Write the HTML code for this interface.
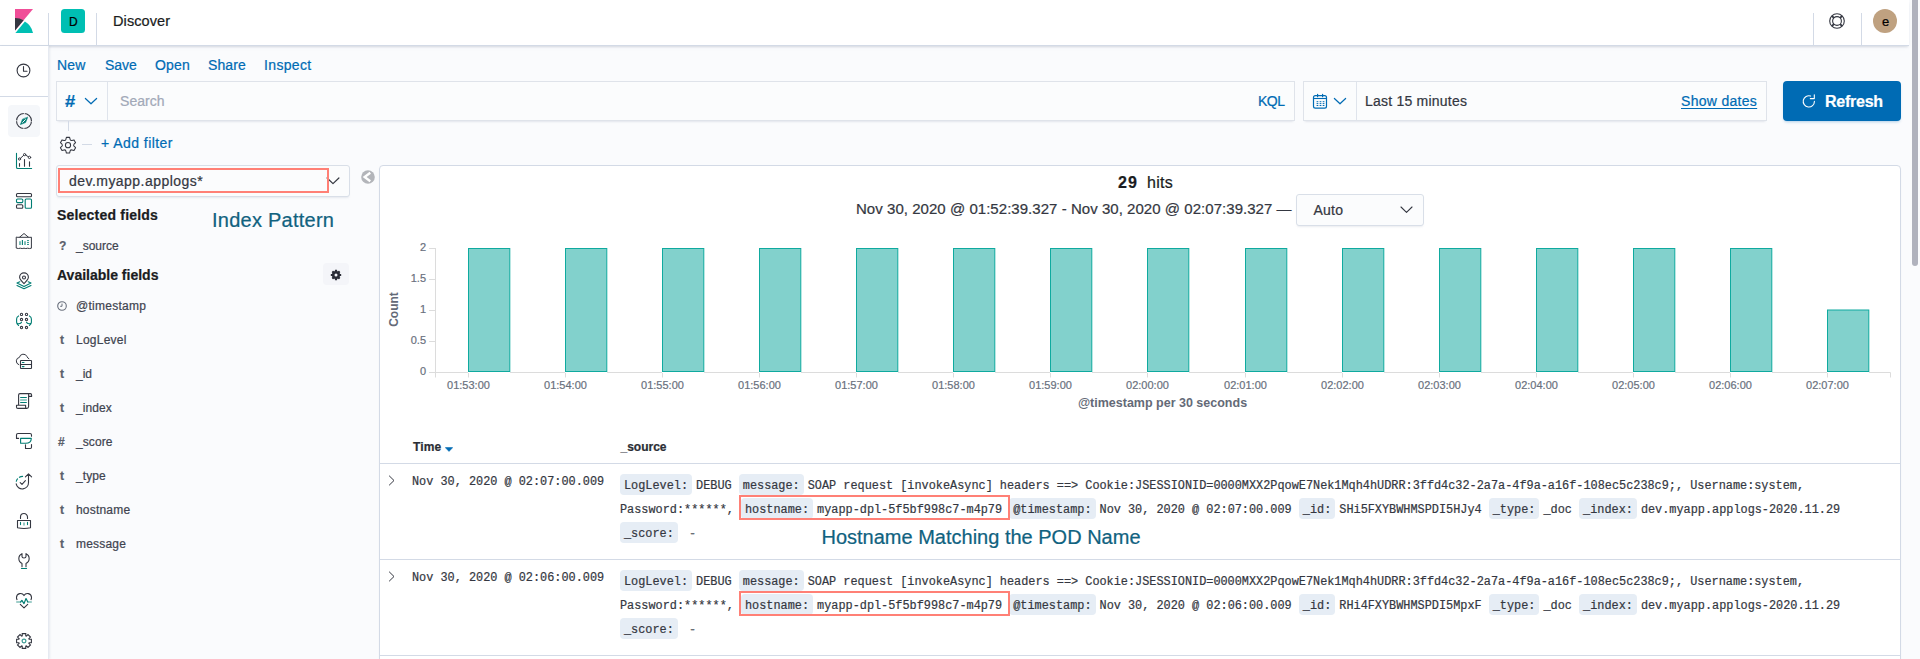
<!DOCTYPE html>
<html lang="en">
<head>
<meta charset="utf-8">
<title>Discover - Kibana</title>
<style>
*{box-sizing:border-box;margin:0;padding:0}
html,body{width:1920px;height:659px;overflow:hidden;background:#fafbfd;font-family:"Liberation Sans",sans-serif;color:#343741;font-size:14px}
.abs{position:absolute}
.t{position:absolute;white-space:nowrap;line-height:1;-webkit-text-stroke:0.22px}
#hdr{position:absolute;left:0;top:0;width:1909px;height:46px;background:#fff;border-bottom:1px solid #d3dae6;box-shadow:0 2px 2px -1px rgba(152,162,179,.3),0 1px 5px -2px rgba(152,162,179,.3)}
#nav{position:absolute;left:0;top:46px;width:49px;height:613px;background:#fff;border-right:1px solid #e6eaf1;box-shadow:1px 0 2px rgba(152,162,179,.18)}
.vsep{position:absolute;width:1px;background:#d3dae6}
.box{background:#fbfcfd;border:1px solid #dfe3ea;box-shadow:0 1px 1px -1px rgba(152,162,179,.2),0 3px 2px -2px rgba(152,162,179,.2)}
.fld{font-size:12px;color:#3f4450}
.ftype{font-size:12px;font-weight:bold;color:#5a606b}
.mono{font-family:"Liberation Mono",monospace;font-size:11.87px;-webkit-text-stroke:0.2px #343741}
.src{line-height:24px;color:#343741}
.src dl{display:block}
.src dt,.src dd{display:inline}
.src dt{background:#e6edf5;border-radius:4px;padding:5px 4px 2px;margin-right:4px;color:#343741}
</style>
</head>
<body>
<div class="abs" style="left:1909px;top:0;width:11px;height:659px;background:#fafbfd"></div>
<div class="abs" style="left:1912px;top:-4px;width:6px;height:270px;background:#b0b2bd;border-radius:3px"></div>
<div id="hdr"></div>
<svg class="abs" style="left:15px;top:9px" width="18" height="24" viewBox="0 0 18 24">
  <polygon points="0,0 18,0 0,21.5" fill="#f04e98"/>
  <path d="M0 9 L0 21.5 L8.6 11.2 A17 17 0 0 0 0 9Z" fill="#343741"/>
  <path d="M9.9 12.6 L0.4 24 L18 24 A17.5 17.5 0 0 0 9.9 12.6Z" fill="#00bfb3"/>
</svg>
<div class="vsep" style="left:48px;top:13px;height:33px"></div>
<div class="abs" style="left:61px;top:9px;width:24px;height:24px;border-radius:3.5px;background:#00bfb3"></div>
<div class="t" style="left:69px;top:15.5px;font-size:12px;color:#000" id="dletter">D</div>
<div class="vsep" style="left:96px;top:13px;height:33px"></div>
<div class="t" style="left:113px;top:13.6px;font-size:14.5px;color:#1a1c21;letter-spacing:0.1px" id="discover">Discover</div>
<div class="vsep" style="left:1813px;top:13px;height:33px"></div>
<svg class="abs" style="left:1829px;top:13px" width="16" height="16" viewBox="0 0 16 16" id="help"><g fill="none" stroke="#343741" stroke-width="1.1"><circle cx="8" cy="8" r="7.3"/><circle cx="8" cy="8" r="4.4"/><path d="M2.8 2.8 L4.9 4.9M13.2 2.8 L11.1 4.9M2.8 13.2 L4.9 11.1M13.2 13.2 L11.1 11.1" stroke-width="1.9"/></g></svg>
<div class="vsep" style="left:1861px;top:13px;height:33px"></div>
<div class="abs" style="left:1873px;top:9px;width:24px;height:24px;border-radius:12px;background:#bfa180"></div>
<div class="t" style="left:1881.9px;top:15.2px;font-size:13px;color:#000" id="eletter">e</div>
<div id="nav"></div>
<div class="abs" style="left:0;top:96px;width:48px;height:1px;background:#d3dae6"></div>
<div class="abs" style="left:8px;top:105px;width:32px;height:32px;border-radius:4px;background:#f5f7fa"></div>
<svg class="abs" style="left:0;top:0" width="48" height="659" viewBox="0 0 48 659" fill="none" stroke-linecap="round" stroke-linejoin="round" id="navicons"><circle cx="23.5" cy="70.5" r="6.4" stroke="#343741" stroke-width="1.1"/><path d="M23.5 66.6V71.2H27" stroke="#343741" stroke-width="1.1"/><circle cx="24" cy="121" r="7.5" stroke="#343741" stroke-width="1.1"/><circle cx="24" cy="121" r="7.5" stroke="#fff" stroke-width="1.4" stroke-dasharray="0.9 10.9" stroke-dashoffset="0.45" stroke-linecap="butt"/><path d="M27.6 117.4 L25.6 122.6 L20.4 124.6 L22.4 119.4Z" fill="#017d73" stroke="#017d73" stroke-width=".6"/><path d="M25.4 119.6 L22.6 122.4" stroke="#f5f7fa" stroke-width="1"/><path d="M16.5 153.4V167.2Q16.5 168.5 17.8 168.5H31.6" stroke="#017d73" stroke-width="1.1"/><path d="M19.5 163.5V166.3M24.5 159.5V166.3M29.5 161.8V166.3" stroke="#343741" stroke-width="1.1"/><path d="M20.4 158.3 L23.6 155.4M25.7 155.1 L28.4 156.8" stroke="#343741" stroke-width="1"/><circle cx="19.5" cy="159" r="1.1" stroke="#343741" stroke-width="1"/><circle cx="24.6" cy="154.6" r="1.1" stroke="#343741" stroke-width="1"/><circle cx="29.5" cy="157.4" r="1.2" stroke="#343741" stroke-width="1"/><rect x="16.5" y="193.5" width="15" height="3.3" rx="1" stroke="#343741" stroke-width="1.1"/><rect x="16.5" y="199" width="6.3" height="3.6" rx="1" stroke="#017d73" stroke-width="1.1"/><rect x="16.5" y="204.7" width="6.3" height="3.6" rx="1" stroke="#343741" stroke-width="1.1"/><rect x="25.2" y="199" width="6.3" height="9.3" rx="1" stroke="#017d73" stroke-width="1.1"/><path d="M16.6 237.2 Q18 237.6 19.6 237.2 L24 233.5 L28.4 237.2 Q30 237.6 31.4 237.2 V248.2 Q29.5 248.9 27.7 248.2 Q25.8 248.9 24 248.2 Q22.2 248.9 20.3 248.2 Q18.5 248.9 16.6 248.2Z" stroke="#343741" stroke-width="1"/><path d="M19.6 237.3H28.4" stroke="#343741" stroke-width="1"/><path d="M20 241.2V245M25 241.2V245" stroke="#7dbdb7" stroke-width="2" stroke-linecap="butt"/><path d="M22.4 240V245" stroke="#017d73" stroke-width="1.1" stroke-linecap="butt"/><path d="M27.2 240.6H28.8M27.2 242.6H28.8M27.2 244.5H28.8" stroke="#017d73" stroke-width="1" stroke-linecap="butt"/><path d="M24 283.6 C21.5 281 19.6 279.4 19.6 277.3 A4.4 4.4 0 0 1 28.4 277.3 C28.4 279.4 26.5 281 24 283.6Z" stroke="#343741" stroke-width="1.1"/><circle cx="24" cy="277.5" r="1.5" stroke="#343741" stroke-width="1.1"/><path d="M19.8 281.8 L17 283.1 L24 286.4 L31 283.1 L28.2 281.8M17 285.6 L24 288.8 L31 285.6" stroke="#017d73" stroke-width="1.1"/><circle cx="21.5" cy="314.4" r="1.15" stroke="#343741" stroke-width="1.05"/><circle cx="21.5" cy="319.5" r="1.15" stroke="#343741" stroke-width="1.05"/><circle cx="21.5" cy="327.5" r="1.15" stroke="#343741" stroke-width="1.05"/><circle cx="26.5" cy="314.4" r="1.15" stroke="#343741" stroke-width="1.05"/><circle cx="26.5" cy="319.5" r="1.15" stroke="#343741" stroke-width="1.05"/><circle cx="26.5" cy="327.5" r="1.15" stroke="#343741" stroke-width="1.05"/><path d="M18.6 315.9 Q16.6 316.8 16.6 319 V322.3 Q16.6 324.4 18.6 325.4 M16.7 322.8 Q17.3 323.9 19 323.7 Q21 323.5 21.5 322.3" stroke="#017d73" stroke-width="1.1"/><path d="M29.4 315.9 Q31.4 316.8 31.4 319 V322.3 Q31.4 324.4 29.4 325.4 M31.3 322.8 Q30.7 323.9 29 323.7 Q27 323.5 26.5 322.3" stroke="#017d73" stroke-width="1.1"/><rect x="20.5" y="360.5" width="11" height="8" rx=".6" stroke="#343741" stroke-width="1.1"/><path d="M20.5 364.5H31.5" stroke="#343741" stroke-width="1.1"/><path d="M22.4 362.5H24M22.4 366.6H24" stroke="#017d73" stroke-width="1.1"/><path d="M18.8 364.7 A3.8 3.8 0 0 1 19.4 357.4 A4 4 0 0 1 27 356.6 Q27.6 358.2 28.9 358.8" stroke="#343741" stroke-width="1"/><path d="M18.6 405.2V395 Q18.6 393.6 20 393.6 H30.3 Q31.6 393.6 31.6 395 V396.4 H28.6 V394.6 M28.6 394.6 V406.6 Q28.6 408.4 26.8 408.4 H17.8 Q16.5 408.4 16.5 407 V405.3 H25.6 V407.2 Q25.7 408.3 26.8 408.4" stroke="#343741" stroke-width="1.1"/><path d="M20.6 397.5H26.4M20.6 402.5H26.4" stroke="#017d73" stroke-width="1"/><path d="M20.6 400H26.4" stroke="#7dbdb7" stroke-width="1.4"/><path d="M18.6 438.4H16.5V435 Q16.5 433.5 18 433.5 H30 Q31.5 433.5 31.5 435 V436.2" stroke="#343741" stroke-width="1.1"/><path d="M20.6 438.4H31.3 Q31.2 443.2 25.6 443.3 H20.6Z" stroke="#017d73" stroke-width="1.1"/><path d="M25.5 444.8V448.5H30.3 Q31.5 448.5 31.5 447.3 V444.6" stroke="#343741" stroke-width="1.1"/><path d="M16.2 483.8 A6.2 6.2 0 0 0 28.5 482.4 V474 M25.4 476.8 L28.5 473.8 L31.6 476.8" stroke="#343741" stroke-width="1.1"/><path d="M20.2 482.6 L22 484.3 L25.4 480.6" stroke="#343741" stroke-width="1.1"/><path d="M16.3 481.3 Q16.6 480 17.5 478.9 M19.4 477.3 Q20.8 476.4 22.6 476.4" stroke="#017d73" stroke-width="1.1"/><path d="M17.5 520.5H30.5V527.7 Q24 529.3 17.5 527.7Z" stroke="#343741" stroke-width="1.1"/><path d="M20.5 518.5V517 A3.5 3.5 0 0 1 27.5 517V518.5" stroke="#343741" stroke-width="1.1"/><path d="M20.5 522.4V524.6M27.5 522.4V524.6" stroke="#017d73" stroke-width="1.1"/><path d="M24 522.4V525.6" stroke="#7dbdb7" stroke-width="1.6" stroke-linecap="butt"/><path d="M22 553.6V556.4 Q22 558 24 558 Q26 558 26 556.4V553.6 M22 553.7 A5.3 5.3 0 0 0 22 563.4 V566.8 M26 553.7 A5.3 5.3 0 0 1 26 563.4 V566.8" stroke="#343741" stroke-width="1.1"/><path d="M21.4 568.5H26.6" stroke="#017d73" stroke-width="1.1"/><path d="M17 599.6 Q16.4 598.6 16.5 597.3 A4 4 0 0 1 24 595.6 A4 4 0 0 1 31.5 597.3 Q31.6 598.6 31 599.6 M20.3 604.3 L24 607.8 L27.7 604.3" stroke="#343741" stroke-width="1.1"/><path d="M16.2 602H20.6M27.8 602H31.8" stroke="#7dbdb7" stroke-width="1.5" stroke-linecap="butt"/><path d="M20.6 602 L21.9 600.4 L24 603.6 L26 598.5 L27.8 602" stroke="#017d73" stroke-width="1.2"/><path d="M22.25 635.89 L22.23 633.61 L25.77 633.61 L25.75 635.89 L26.38 636.15 L27.98 634.52 L30.48 637.02 L28.85 638.62 L29.11 639.25 L31.39 639.23 L31.39 642.77 L29.11 642.75 L28.85 643.38 L30.48 644.98 L27.98 647.48 L26.38 645.85 L25.75 646.11 L25.77 648.39 L22.23 648.39 L22.25 646.11 L21.62 645.85 L20.02 647.48 L17.52 644.98 L19.15 643.38 L18.89 642.75 L16.61 642.77 L16.61 639.23 L18.89 639.25 L19.15 638.62 L17.52 637.02 L20.02 634.52 L21.62 636.15Z" stroke="#343741" stroke-width="1.1" stroke-linejoin="miter"/><circle cx="24" cy="641" r="1.9" stroke="#3d9c94" stroke-width="1.2"/></svg>
<div class="t" style="left:57px;top:57.6px;font-size:14px;color:#006bb4;letter-spacing:0.15px" id="m1">New</div>
<div class="t" style="left:105px;top:57.6px;font-size:14px;color:#006bb4" id="m2">Save</div>
<div class="t" style="left:155px;top:57.6px;font-size:14px;color:#006bb4;letter-spacing:0.15px" id="m3">Open</div>
<div class="t" style="left:208px;top:57.6px;font-size:14px;color:#006bb4;letter-spacing:0.1px" id="m4">Share</div>
<div class="t" style="left:264px;top:57.6px;font-size:14px;color:#006bb4;letter-spacing:0.35px" id="m5">Inspect</div>
<div class="abs box" style="left:56px;top:81px;width:1239px;height:40px" id="qbar"></div>
<div class="vsep" style="left:107px;top:82px;height:38px;background:#dfe4ec"></div>
<div class="t" style="left:64.8px;top:92.5px;font-size:16.5px;color:#006bb4;font-weight:bold;transform:scaleX(1.12);transform-origin:left center" id="hash">#</div>
<svg class="abs" style="left:84px;top:97px" width="14" height="8" viewBox="0 0 14 8"><path d="M1.4 1.5 L7 6.8 L12.6 1.5" fill="none" stroke="#006bb4" stroke-width="1.2" stroke-linecap="round" stroke-linejoin="round"/></svg>
<div class="t" style="left:120px;top:94px;font-size:14px;color:#a2a9b8;letter-spacing:0.05px" id="search">Search</div>
<div class="t" style="left:1258px;top:94px;font-size:14px;color:#006bb4;letter-spacing:-0.5px" id="kql">KQL</div>
<div class="abs box" style="left:1303px;top:81px;width:464px;height:40px" id="dbox"></div>
<div class="vsep" style="left:1356px;top:82px;height:38px;background:#dfe4ec"></div>
<svg class="abs" style="left:1312px;top:93px" width="16" height="16" viewBox="0 0 16 16" id="cal">
 <rect x="1.5" y="2.6" width="13" height="12.6" rx="1.9" fill="none" stroke="#006bb4" stroke-width="1.2"/>
 <path d="M1.5 5.5H14.5" stroke="#006bb4" stroke-width="1.1"/>
 <path d="M5.6 1.3V3.7M10.6 1.3V3.7" stroke="#006bb4" stroke-width="1.2" stroke-linecap="round"/>
 <g fill="#006bb4"><rect x="4.6" y="8.2" width="1.7" height="1"/><rect x="7.65" y="8.2" width="1.7" height="1"/><rect x="10.7" y="8.2" width="1.7" height="1"/><rect x="4.6" y="10.1" width="1.7" height="1"/><rect x="7.65" y="10.1" width="1.7" height="1"/><rect x="10.7" y="10.1" width="1.7" height="1"/><rect x="4.6" y="12" width="1.7" height="1"/><rect x="7.65" y="12" width="1.7" height="1"/><rect x="10.7" y="12" width="1.7" height="1"/></g>
</svg>
<svg class="abs" style="left:1333px;top:97px" width="14" height="8" viewBox="0 0 14 8"><path d="M1.4 1.5 L7 6.8 L12.6 1.5" fill="none" stroke="#006bb4" stroke-width="1.2" stroke-linecap="round" stroke-linejoin="round"/></svg>
<div class="t" style="left:1365px;top:94px;font-size:14px;color:#343741;letter-spacing:0.22px" id="last15">Last 15 minutes</div>
<div class="t" style="left:1681px;top:94px;font-size:14px;color:#006bb4;letter-spacing:0.3px;text-decoration:underline;text-underline-offset:1.5px" id="showdates">Show dates</div>
<div class="abs" style="left:1783px;top:81px;width:118px;height:40px;background:#006bb4;border-radius:4px;box-shadow:0 2px 3px -1px rgba(0,107,180,.3)" id="refbtn"></div>
<svg class="abs" style="left:1802px;top:93.5px" width="14" height="14" viewBox="0 0 14 14"><path d="M12.4 7.4 A5.6 5.6 0 1 1 8.6 2.1" fill="none" stroke="#fff" stroke-width="1.1" stroke-linecap="round"/><path d="M8.3 4.6H12.3V0.8" fill="none" stroke="#fff" stroke-width="1.1" stroke-linecap="round" stroke-linejoin="round"/></svg>
<div class="t" style="left:1825px;top:94px;font-size:16px;color:#fff;letter-spacing:-0.25px;font-weight:bold" id="refresh">Refresh</div>
<div class="vsep" style="left:68px;top:121px;height:10px;background:#d3dae6"></div>
<svg class="abs" style="left:56px;top:132px" width="24" height="26" viewBox="56 132 24 26" fill="none" stroke="#343741" stroke-width="1.05" stroke-linejoin="round" id="fgear"><path d="M65.85 139.49 L66.41 137.36 L69.59 137.36 L70.15 139.49 Q70.60 140.70 71.87 140.48 L74.00 139.90 L75.58 142.66 L74.02 144.21 Q73.20 145.20 74.02 146.19 L75.58 147.74 L74.00 150.50 L71.87 149.92 Q70.60 149.70 70.15 150.91 L69.59 153.04 L66.41 153.04 L65.85 150.91 Q65.40 149.70 64.13 149.92 L62.00 150.50 L60.42 147.74 L61.98 146.19 Q62.80 145.20 61.98 144.21 L60.42 142.66 L62.00 139.90 L64.13 140.48 Q65.40 140.70 65.85 139.49Z"/><circle cx="68" cy="145.2" r="2.6"/></svg>
<div class="abs" style="left:82px;top:144px;width:10px;height:1px;background:#d3dae6"></div>
<div class="t" style="left:101px;top:136px;font-size:14px;color:#006bb4;letter-spacing:0.45px" id="addfilter">+ Add filter</div>
<div class="abs" style="left:56px;top:165px;width:294px;height:32px;background:#fbfcfd;border:1px solid #d9dfe8;border-radius:3px;box-shadow:0 2px 2px -1px rgba(152,162,179,.2)" id="ipbox"></div>
<svg class="abs" style="left:326px;top:176px" width="14" height="9" viewBox="0 0 14 9"><path d="M1.1 2 L7 7.6 L12.9 2" fill="none" stroke="#343741" stroke-width="1.2" stroke-linecap="round" stroke-linejoin="round"/></svg>
<div class="abs" style="left:58px;top:168px;width:271px;height:25px;border:2px solid #ff8076" id="redbox1"></div>
<div class="t" style="left:69px;top:174px;font-size:14px;color:#343741;letter-spacing:0.46px" id="ipname">dev.myapp.applogs*</div>
<svg class="abs" style="left:361.4px;top:170.2px" width="14" height="14" viewBox="0 0 14 14"><circle cx="7" cy="7" r="6.8" fill="#b3b5ba"/><path d="M9.3 2.8 L3.6 7 L9.3 11.2" fill="none" stroke="#fff" stroke-width="2.3" stroke-linejoin="miter"/></svg>
<div class="t" style="left:57px;top:208px;font-size:14px;color:#1a1c21;letter-spacing:0.2px;font-weight:bold" id="selfields">Selected fields</div>
<div class="t" style="left:212px;top:210px;font-size:20px;color:#10627f;letter-spacing:0.25px" id="idxpat">Index Pattern</div>
<div class="t" style="left:59px;top:240px;font-size:12px;color:#5a606b;font-weight:bold" id="qmark">?</div>
<div class="t fld" style="left:76px;top:240px" id="f0">_source</div>
<div class="t" style="left:57px;top:268px;font-size:14px;color:#1a1c21;font-weight:bold" id="avfields">Available fields</div>
<div class="abs" style="left:323px;top:263px;width:26px;height:22px;background:#f4f5f9;border-radius:4px"></div>
<svg class="abs" style="left:330.05px;top:268.75px" width="12" height="12" viewBox="0 0 12 12" id="gearsm"><g fill="#2b2e38"><circle cx="6" cy="6" r="4.05"/><rect x="4.9" y="0.8" width="2.2" height="10.4" rx=".3" transform="rotate(0 6 6)"/><rect x="4.9" y="0.8" width="2.2" height="10.4" rx=".3" transform="rotate(45 6 6)"/><rect x="4.9" y="0.8" width="2.2" height="10.4" rx=".3" transform="rotate(90 6 6)"/><rect x="4.9" y="0.8" width="2.2" height="10.4" rx=".3" transform="rotate(135 6 6)"/></g><circle cx="6" cy="6" r="1.5" fill="#f4f5f9"/></svg>
<svg class="abs" style="left:57px;top:301.0px" width="10" height="10" viewBox="0 0 10 10"><circle cx="5" cy="5" r="4.3" fill="none" stroke="#69707d" stroke-width="1.1"/><path d="M5 2.6V5.3H3.2" fill="none" stroke="#69707d" stroke-width="1"/></svg>
<div class="t fld" style="left:76px;top:299.8px;letter-spacing:0.26px" id="fl0">@timestamp</div>
<div class="t ftype" style="left:60px;top:333.8px">t</div>
<div class="t fld" style="left:76px;top:333.8px;letter-spacing:0.25px" id="fl1">LogLevel</div>
<div class="t ftype" style="left:60px;top:367.8px">t</div>
<div class="t fld" style="left:76px;top:367.8px" id="fl2">_id</div>
<div class="t ftype" style="left:60px;top:401.8px">t</div>
<div class="t fld" style="left:76px;top:401.8px;letter-spacing:0.1px" id="fl3">_index</div>
<div class="t ftype" style="left:58px;top:435.8px">#</div>
<div class="t fld" style="left:76px;top:435.8px;letter-spacing:0.1px" id="fl4">_score</div>
<div class="t ftype" style="left:60px;top:469.8px">t</div>
<div class="t fld" style="left:76px;top:469.8px;letter-spacing:0.1px" id="fl5">_type</div>
<div class="t ftype" style="left:60px;top:503.8px">t</div>
<div class="t fld" style="left:76px;top:503.8px;letter-spacing:0.2px" id="fl6">hostname</div>
<div class="t ftype" style="left:60px;top:537.8px">t</div>
<div class="t fld" style="left:76px;top:537.8px;letter-spacing:0.2px" id="fl7">message</div>
<div class="abs" style="left:379px;top:165px;width:1522px;height:520px;background:#fff;border:1px solid #d3dae6;border-radius:4px;box-shadow:0 2px 2px -1px rgba(152,162,179,.3)" id="panel"></div>
<div class="t" style="left:1118px;top:175px;font-size:16px;color:#1a1c21;letter-spacing:1.1px;font-weight:bold" id="hits29">29</div>
<div class="t" style="left:1147px;top:175px;font-size:16px;color:#1a1c21;letter-spacing:0.25px" id="hits">hits</div>
<div class="t" style="left:856px;top:200.5px;font-size:15px;color:#343741;letter-spacing:0.04px" id="range">Nov 30, 2020 @ 01:52:39.327 - Nov 30, 2020 @ 02:07:39.327 —</div>
<div class="abs" style="left:1296px;top:194px;width:128px;height:32px;background:#fbfcfd;border:1px solid #d9dfe8;border-radius:3px;box-shadow:0 2px 2px -1px rgba(152,162,179,.2)"></div>
<div class="t" style="left:1313.5px;top:203px;font-size:14px;color:#343741;letter-spacing:0.25px" id="auto">Auto</div>
<svg class="abs" style="left:1400px;top:206px" width="13" height="8" viewBox="0 0 13 8"><path d="M1 1 L6.5 6.4 L12 1" fill="none" stroke="#343741" stroke-width="1.1" stroke-linecap="round" stroke-linejoin="round"/></svg>
<svg class="abs" style="left:380px;top:235px" width="1520" height="180" viewBox="380 235 1520 180" font-family="Liberation Sans, sans-serif" id="chart">
<path d="M435.5 248V377.5M435 372.5H1890.5M1890.5 372.5V377.5" fill="none" stroke="#dcdcdc" stroke-width="1"/>
<path d="M429 248.5H435" stroke="#dcdcdc" stroke-width="1"/><text x="426" y="251.4" text-anchor="end" font-size="11" fill="#69707d" stroke="#69707d" stroke-width=".2">2</text>
<path d="M429 279.5H435" stroke="#dcdcdc" stroke-width="1"/><text x="426" y="282.4" text-anchor="end" font-size="11" fill="#69707d" stroke="#69707d" stroke-width=".2">1.5</text>
<path d="M429 310.5H435" stroke="#dcdcdc" stroke-width="1"/><text x="426" y="313.4" text-anchor="end" font-size="11" fill="#69707d" stroke="#69707d" stroke-width=".2">1</text>
<path d="M429 341.5H435" stroke="#dcdcdc" stroke-width="1"/><text x="426" y="344.4" text-anchor="end" font-size="11" fill="#69707d" stroke="#69707d" stroke-width=".2">0.5</text>
<path d="M429 372.5H435" stroke="#dcdcdc" stroke-width="1"/><text x="426" y="375.4" text-anchor="end" font-size="11" fill="#69707d" stroke="#69707d" stroke-width=".2">0</text>
<rect x="468" y="372" width="42" height="1" fill="#fff"/><rect x="468.5" y="248.5" width="41.3" height="123.0" fill="#82d1cc" stroke="#0faa9f" stroke-width="1"/><path d="M468.5 373V377.5" stroke="#dcdcdc" stroke-width="1"/><text x="468.5" y="389" text-anchor="middle" font-size="11" fill="#69707d" stroke="#69707d" stroke-width=".2">01:53:00</text>
<rect x="565" y="372" width="42" height="1" fill="#fff"/><rect x="565.5" y="248.5" width="41.3" height="123.0" fill="#82d1cc" stroke="#0faa9f" stroke-width="1"/><path d="M565.5 373V377.5" stroke="#dcdcdc" stroke-width="1"/><text x="565.5" y="389" text-anchor="middle" font-size="11" fill="#69707d" stroke="#69707d" stroke-width=".2">01:54:00</text>
<rect x="662" y="372" width="42" height="1" fill="#fff"/><rect x="662.5" y="248.5" width="41.3" height="123.0" fill="#82d1cc" stroke="#0faa9f" stroke-width="1"/><path d="M662.5 373V377.5" stroke="#dcdcdc" stroke-width="1"/><text x="662.5" y="389" text-anchor="middle" font-size="11" fill="#69707d" stroke="#69707d" stroke-width=".2">01:55:00</text>
<rect x="759" y="372" width="42" height="1" fill="#fff"/><rect x="759.5" y="248.5" width="41.3" height="123.0" fill="#82d1cc" stroke="#0faa9f" stroke-width="1"/><path d="M759.5 373V377.5" stroke="#dcdcdc" stroke-width="1"/><text x="759.5" y="389" text-anchor="middle" font-size="11" fill="#69707d" stroke="#69707d" stroke-width=".2">01:56:00</text>
<rect x="856" y="372" width="42" height="1" fill="#fff"/><rect x="856.5" y="248.5" width="41.3" height="123.0" fill="#82d1cc" stroke="#0faa9f" stroke-width="1"/><path d="M856.5 373V377.5" stroke="#dcdcdc" stroke-width="1"/><text x="856.5" y="389" text-anchor="middle" font-size="11" fill="#69707d" stroke="#69707d" stroke-width=".2">01:57:00</text>
<rect x="953" y="372" width="42" height="1" fill="#fff"/><rect x="953.5" y="248.5" width="41.3" height="123.0" fill="#82d1cc" stroke="#0faa9f" stroke-width="1"/><path d="M953.5 373V377.5" stroke="#dcdcdc" stroke-width="1"/><text x="953.5" y="389" text-anchor="middle" font-size="11" fill="#69707d" stroke="#69707d" stroke-width=".2">01:58:00</text>
<rect x="1050" y="372" width="42" height="1" fill="#fff"/><rect x="1050.5" y="248.5" width="41.3" height="123.0" fill="#82d1cc" stroke="#0faa9f" stroke-width="1"/><path d="M1050.5 373V377.5" stroke="#dcdcdc" stroke-width="1"/><text x="1050.5" y="389" text-anchor="middle" font-size="11" fill="#69707d" stroke="#69707d" stroke-width=".2">01:59:00</text>
<rect x="1147" y="372" width="42" height="1" fill="#fff"/><rect x="1147.5" y="248.5" width="41.3" height="123.0" fill="#82d1cc" stroke="#0faa9f" stroke-width="1"/><path d="M1147.5 373V377.5" stroke="#dcdcdc" stroke-width="1"/><text x="1147.5" y="389" text-anchor="middle" font-size="11" fill="#69707d" stroke="#69707d" stroke-width=".2">02:00:00</text>
<rect x="1245" y="372" width="42" height="1" fill="#fff"/><rect x="1245.5" y="248.5" width="41.3" height="123.0" fill="#82d1cc" stroke="#0faa9f" stroke-width="1"/><path d="M1245.5 373V377.5" stroke="#dcdcdc" stroke-width="1"/><text x="1245.5" y="389" text-anchor="middle" font-size="11" fill="#69707d" stroke="#69707d" stroke-width=".2">02:01:00</text>
<rect x="1342" y="372" width="42" height="1" fill="#fff"/><rect x="1342.5" y="248.5" width="41.3" height="123.0" fill="#82d1cc" stroke="#0faa9f" stroke-width="1"/><path d="M1342.5 373V377.5" stroke="#dcdcdc" stroke-width="1"/><text x="1342.5" y="389" text-anchor="middle" font-size="11" fill="#69707d" stroke="#69707d" stroke-width=".2">02:02:00</text>
<rect x="1439" y="372" width="42" height="1" fill="#fff"/><rect x="1439.5" y="248.5" width="41.3" height="123.0" fill="#82d1cc" stroke="#0faa9f" stroke-width="1"/><path d="M1439.5 373V377.5" stroke="#dcdcdc" stroke-width="1"/><text x="1439.5" y="389" text-anchor="middle" font-size="11" fill="#69707d" stroke="#69707d" stroke-width=".2">02:03:00</text>
<rect x="1536" y="372" width="42" height="1" fill="#fff"/><rect x="1536.5" y="248.5" width="41.3" height="123.0" fill="#82d1cc" stroke="#0faa9f" stroke-width="1"/><path d="M1536.5 373V377.5" stroke="#dcdcdc" stroke-width="1"/><text x="1536.5" y="389" text-anchor="middle" font-size="11" fill="#69707d" stroke="#69707d" stroke-width=".2">02:04:00</text>
<rect x="1633" y="372" width="42" height="1" fill="#fff"/><rect x="1633.5" y="248.5" width="41.3" height="123.0" fill="#82d1cc" stroke="#0faa9f" stroke-width="1"/><path d="M1633.5 373V377.5" stroke="#dcdcdc" stroke-width="1"/><text x="1633.5" y="389" text-anchor="middle" font-size="11" fill="#69707d" stroke="#69707d" stroke-width=".2">02:05:00</text>
<rect x="1730" y="372" width="42" height="1" fill="#fff"/><rect x="1730.5" y="248.5" width="41.3" height="123.0" fill="#82d1cc" stroke="#0faa9f" stroke-width="1"/><path d="M1730.5 373V377.5" stroke="#dcdcdc" stroke-width="1"/><text x="1730.5" y="389" text-anchor="middle" font-size="11" fill="#69707d" stroke="#69707d" stroke-width=".2">02:06:00</text>
<rect x="1827" y="372" width="42" height="1" fill="#fff"/><rect x="1827.5" y="310.0" width="41.3" height="61.5" fill="#82d1cc" stroke="#0faa9f" stroke-width="1"/><path d="M1827.5 373V377.5" stroke="#dcdcdc" stroke-width="1"/><text x="1827.5" y="389" text-anchor="middle" font-size="11" fill="#69707d" stroke="#69707d" stroke-width=".2">02:07:00</text>
<text x="1162.5" y="407" text-anchor="middle" font-size="12.5" font-weight="bold" fill="#646a77" id="xtitle">@timestamp per 30 seconds</text>
<text transform="translate(398,309.5) rotate(-90)" text-anchor="middle" font-size="12" font-weight="bold" fill="#646a77" id="ytitle">Count</text>
</svg>
<div class="t" style="left:413px;top:441px;font-size:12px;color:#2b2e36;letter-spacing:0.15px;font-weight:bold" id="thtime">Time</div>
<svg class="abs" style="left:445px;top:447px" width="8" height="5" viewBox="0 0 8 5"><path d="M0.3 0.6H7.7L4 4.4Z" fill="#006bb4" stroke="#006bb4" stroke-width=".6" stroke-linejoin="round"/></svg>
<div class="t" style="left:620.5px;top:441px;font-size:12px;color:#2b2e36;font-weight:bold" id="thsrc">_source</div>
<div class="abs" style="left:380px;top:463px;width:1520px;height:1px;background:#d3dae6"></div>
<svg class="abs" style="left:388px;top:475.0px" width="8" height="11" viewBox="0 0 8 11"><path d="M1.4 1 L6 5.5 L1.4 10" fill="none" stroke="#343741" stroke-width="1" stroke-linecap="round" stroke-linejoin="round"/></svg>
<div class="t mono" style="left:412px;top:476.5px;color:#343741" id="date0">Nov 30, 2020 @ 02:07:00.009</div>
<div class="abs mono src" style="left:620px;top:473.5px;width:1272px" id="src0"><dl><dt>LogLevel:</dt><dd>DEBUG</dd> <dt>message:</dt><dd>SOAP request [invokeAsync] headers ==&gt; Cookie:JSESSIONID=0000MXX2PqowE7Nek1Mqh4hUDRR:3ffd4c32-2a7a-4f9a-a16f-108ec5c238c9;, Username:system, Password:******,</dd> <dt>hostname:</dt><dd>myapp-dpl-5f5bf998c7-m4p79</dd> <dt>@timestamp:</dt><dd>Nov 30, 2020 @ 02:07:00.009</dd> <dt>_id:</dt><dd>SHi5FXYBWHMSPDI5HJy4</dd> <dt>_type:</dt><dd>_doc</dd> <dt>_index:</dt><dd>dev.myapp.applogs-2020.11.29</dd> <dt>_score:</dt><dd style="color:#7b7f8a">&nbsp;-&nbsp;</dd></dl></div>
<div class="abs" style="left:739px;top:495.0px;width:271px;height:25px;border:2px solid #ff8076" id="red0"></div>
<div class="abs" style="left:380px;top:559.0px;width:1520px;height:1px;background:#d3dae6"></div>
<div class="t" style="left:821.5px;top:527.3px;font-size:20px;color:#10627f" id="hostann">Hostname Matching the POD Name</div>
<svg class="abs" style="left:388px;top:571.0px" width="8" height="11" viewBox="0 0 8 11"><path d="M1.4 1 L6 5.5 L1.4 10" fill="none" stroke="#343741" stroke-width="1" stroke-linecap="round" stroke-linejoin="round"/></svg>
<div class="t mono" style="left:412px;top:572.5px;color:#343741" id="date1">Nov 30, 2020 @ 02:06:00.009</div>
<div class="abs mono src" style="left:620px;top:569.5px;width:1272px" id="src1"><dl><dt>LogLevel:</dt><dd>DEBUG</dd> <dt>message:</dt><dd>SOAP request [invokeAsync] headers ==&gt; Cookie:JSESSIONID=0000MXX2PqowE7Nek1Mqh4hUDRR:3ffd4c32-2a7a-4f9a-a16f-108ec5c238c9;, Username:system, Password:******,</dd> <dt>hostname:</dt><dd>myapp-dpl-5f5bf998c7-m4p79</dd> <dt>@timestamp:</dt><dd>Nov 30, 2020 @ 02:06:00.009</dd> <dt>_id:</dt><dd>RHi4FXYBWHMSPDI5MpxF</dd> <dt>_type:</dt><dd>_doc</dd> <dt>_index:</dt><dd>dev.myapp.applogs-2020.11.29</dd> <dt>_score:</dt><dd style="color:#7b7f8a">&nbsp;-&nbsp;</dd></dl></div>
<div class="abs" style="left:739px;top:591.0px;width:271px;height:25px;border:2px solid #ff8076" id="red1"></div>
<div class="abs" style="left:380px;top:655.0px;width:1520px;height:1px;background:#d3dae6"></div>
</body>
</html>
